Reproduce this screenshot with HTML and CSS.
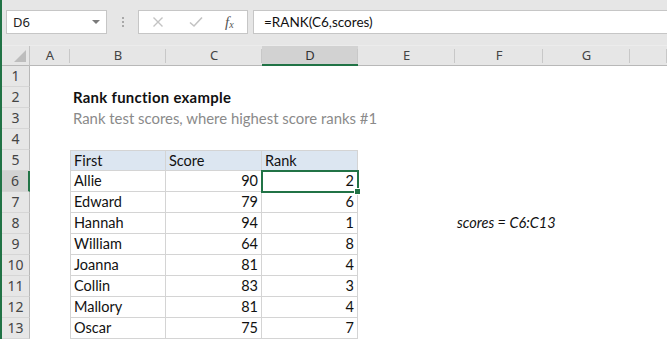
FILE: index.html
```html
<!DOCTYPE html>
<html lang="en">

<head>
    <meta charset="utf-8">
    <title>Rank function example</title>
    <link rel="stylesheet" href="styles.css">
</head>

<body>

    <div class="toolbar">
        <div class="namebox">
            <span>D6</span>
            <span class="caret"></span>
        </div>
        <div class="grip"><i></i><i></i><i></i></div>
        <div class="buttons">
            <svg class="cancel" width="12" height="12" viewBox="0 0 12 12">
                <path d="M1.5 1.5 L10.5 10.5 M10.5 1.5 L1.5 10.5" stroke="#c3c3c3" stroke-width="1.4" fill="none" />
            </svg>
            <svg class="enter" width="14" height="12" viewBox="0 0 14 12">
                <path d="M1 6.5 L5 10 L13 1.5" stroke="#c3c3c3" stroke-width="1.6" fill="none" />
            </svg>
            <span class="fx">f<sub>x</sub></span>
        </div>
        <div class="formula">=RANK(C6,scores)</div>
    </div>

    <section class="sheet"></section>

    <script>
        const letters = ["A", "B", "C", "D", "E", "F", "G", ""];
        const people = [
            ["Allie", 90, 2],
            ["Edward", 79, 6],
            ["Hannah", 94, 1],
            ["William", 64, 8],
            ["Joanna", 81, 4],
            ["Collin", 83, 3],
            ["Mallory", 81, 4],
            ["Oscar", 75, 7]
        ];
        const sheet = document.querySelector(".sheet");

        function addCell(text, klasse) {
            const div = document.createElement("div");
            div.className = klasse;
            div.textContent = text;
            sheet.appendChild(div);
            return div;
        }

        // column headers
        addCell("", "corner");
        letters.forEach(l => {
            addCell(l, l == "D" ? "colhead valgt" : "colhead");
        });

        for (let r = 1; r <= 13; r++) {
            addCell(r, r == 6 ? "rowhead valgt" : "rowhead");
            letters.forEach(l => {
                let text = "";
                let klasse = "cell";
                if (r == 2 && l == "B") {
                    text = "Rank function example";
                    klasse += " title";
                }
                if (r == 3 && l == "B") {
                    text = "Rank test scores, where highest score ranks #1";
                    klasse += " sub";
                }
                if (r == 8 && l == "F") {
                    text = "scores = C6:C13";
                    klasse += " note";
                }
                if (r == 5 && ["B", "C", "D"].includes(l)) {
                    text = { B: "First", C: "Score", D: "Rank" }[l];
                    klasse += " tbl th";
                }
                if (r >= 6 && ["B", "C", "D"].includes(l)) {
                    const p = people[r - 6];
                    text = { B: p[0], C: p[1], D: p[2] }[l];
                    klasse += " tbl";
                    if (l != "B") klasse += " num";
                }
                if (l == "B" && r >= 5) klasse += " first";
                if (r == 6 && l == "D") klasse += " sel";
                addCell(text, klasse);
            });
        }
    </script>
</body>

</html>
```

FILE: styles.css
```css
body {
    margin: 0;
    border-left: 2px solid #217346;
    background-color: #ffffff;
    height: 339px;
    overflow: hidden;
}

.toolbar {
    display: flex;
    align-items: flex-start;
    height: 46px;
    box-sizing: border-box;
    padding: 10px 0 0 4px;
    background-color: #e6e6e6;
    border-bottom: 1px solid #ececec;
}

.namebox,
.buttons,
.formula {
    height: 24px;
    box-sizing: border-box;
    background-color: #ffffff;
    border: 1px solid #c6c6c6;
}

.namebox {
    width: 101px;
    display: flex;
    align-items: center;
    justify-content: space-between;
    padding: 0 6px 0 6px;
    font-family: 'Noto Sans', sans-serif;
    font-size: 13px;
    color: #222;
}

.caret {
    width: 0;
    height: 0;
    border-left: 4px solid transparent;
    border-right: 4px solid transparent;
    border-top: 4px solid #7a7a7a;
}

.grip {
    width: 31px;
    display: flex;
    flex-direction: column;
    align-items: center;
    gap: 2px;
    padding-top: 7px;
}

.grip i {
    width: 2px;
    height: 2px;
    background-color: #a8a8a8;
}

.buttons {
    width: 110px;
    display: flex;
    align-items: center;
    padding-left: 13px;
}

.enter {
    margin-left: 25px;
}

.fx {
    margin-left: 22px;
    font-family: 'Liberation Serif', serif;
    font-style: italic;
    font-size: 15px;
    color: #555;
    line-height: 1;
}

.fx sub {
    font-size: 10px;
    vertical-align: -1px;
}

.formula {
    flex: 1;
    margin-left: 5px;
    border-right: none;
    padding-left: 10px;
    font-family: 'Lato', sans-serif;
    font-size: 13.5px;
    line-height: 22px;
    color: #111;
}

.sheet {
    display: grid;
    grid-template-columns: 28px 40px 96px 96px 96px 97px 88px 87px 1fr;
    grid-template-rows: 20px repeat(13, 21px);
    background-color: #ffffff;
}

.corner,
.colhead,
.rowhead {
    background-color: #e6e6e6;
    box-sizing: border-box;
    font-family: 'Noto Sans', sans-serif;
    font-size: 13px;
    color: #444;
    text-align: center;
}

.corner {
    position: relative;
    border-right: 1px solid #c4c4c4;
    border-bottom: 1px solid #b8b8b8;
}

.corner::after {
    content: "";
    position: absolute;
    right: 3px;
    bottom: 3px;
    border-left: 12px solid transparent;
    border-bottom: 12px solid #bdbdbd;
}

.colhead {
    line-height: 19px;
    border-bottom: 1px solid #b8b8b8;
    background-image: linear-gradient(#c8c8c8, #c8c8c8);
    background-size: 1px 14px;
    background-position: right 3px;
    background-repeat: no-repeat;
}

.colhead.valgt {
    background-color: #d2d2d2;
    border-bottom: 2px solid #217346;
    color: #333;
}

.rowhead {
    line-height: 20px;
    border-right: 1px solid #b8b8b8;
    border-bottom: 1px solid #d6d6d6;
    font-size: 14px;
}

.rowhead.valgt {
    background-color: #d2d2d2;
    border-right: 2px solid #217346;
}

.cell {
    box-sizing: border-box;
    padding: 0 3px;
    white-space: nowrap;
    font-family: 'Lato', sans-serif;
    font-size: 14.5px;
    line-height: 20px;
    color: #111;
}

.title {
    font-weight: bold;
    font-size: 14.9px;
    letter-spacing: 0.3px;
}

.sub {
    color: #8a8a8a;
    font-size: 14.9px;
}

.note {
    padding-left: 2px;
    font-style: italic;
}

.tbl {
    border-right: 1px solid #d4d4d4;
    border-bottom: 1px solid #d4d4d4;
}

.tbl.first {
    border-left: 1px solid #d4d4d4;
}

.th {
    background-color: #dce6f1;
    border-top: 1px solid #d4d4d4;
    line-height: 19px;
}

.num {
    text-align: right;
}

.sel {
    position: relative;
    outline: 2px solid #217346;
    outline-offset: -1px;
}

.sel::after {
    content: "";
    position: absolute;
    right: -4px;
    bottom: -4px;
    width: 5px;
    height: 5px;
    background-color: #217346;
    border: 1px solid #ffffff;
}
```
